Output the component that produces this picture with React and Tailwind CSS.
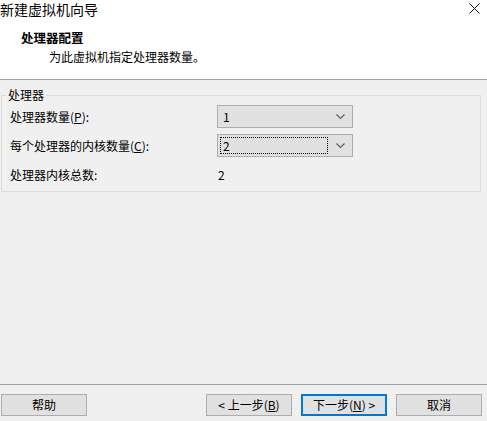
import React from 'react'

const font = { fontFamily: '"Noto Sans CJK SC", "Noto Sans", sans-serif' }

function Chevron() {
  return (
    <svg width="9" height="6" viewBox="0 0 9 6" className="shrink-0">
      <path d="M0.5 0.5 L4.5 4.5 L8.5 0.5" fill="none" stroke="#606060" strokeWidth="1.2" />
    </svg>
  )
}

function Combo({ value, focused }) {
  return (
    <div className="flex h-[23px] w-[136px] items-center border border-[#adadad] bg-[#e1e1e1] pl-[2px] pr-[7px]">
      <div
        className={
          'flex h-[17px] flex-1 items-center pl-[2px] text-[12px] leading-none ' +
          (focused ? 'border border-dotted border-black' : 'border border-transparent')
        }
      >
        {value}
      </div>
      <div className="ml-[8px]"><Chevron /></div>
    </div>
  )
}

function Button({ children, primary }) {
  return (
    <button
      className={
        'flex h-[22px] w-[86px] items-center justify-center bg-[#e1e1e1] text-[12px] leading-none text-black ' +
        (primary ? 'border-2 border-[#0078d7]' : 'border border-[#adadad]')
      }
    >
      {children}
    </button>
  )
}

export default function App() {
  return (
    <div className="flex h-[421px] w-[487px] flex-col bg-[#f0f0f0] text-black" style={font}>
      {/* header */}
      <div className="h-[80px] shrink-0 border-b border-[#a0a0a0] bg-white">
        <div className="flex items-start justify-between">
          <div className="pt-[1px] text-[14px] leading-[16px]">新建虚拟机向导</div>
          <svg width="11" height="11" viewBox="0 0 11 11" className="mr-[7px] mt-[3px]">
            <path d="M0.5 0.5 L10.5 10.5 M10.5 0.5 L0.5 10.5" stroke="#111" strokeWidth="1" />
          </svg>
        </div>
        <div className="ml-[21px] mt-[14px] text-[12.5px] font-bold leading-[14px]">处理器配置</div>
        <div className="ml-[49px] mt-[5px] text-[12px] leading-[14px]">为此虚拟机指定处理器数量。</div>
      </div>

      {/* body */}
      <div className="flex-1">
        <fieldset className="ml-[1px] mt-[8px] h-[104px] w-[480px] border border-[#dcdcdc]">
          <legend className="ml-[4px] px-[2px] text-[12px] leading-[14px]">处理器</legend>
          <div className="grid grid-cols-[207px_136px] gap-y-[6px] pl-[8px] pt-[3px] text-[12px] leading-none">
            <div className="flex items-center">
              处理器数量(<span className="underline">P</span>):
            </div>
            <Combo value="1" />
            <div className="flex items-center">
              每个处理器的内核数量(<span className="underline">C</span>):
            </div>
            <Combo value="2" focused />
            <div className="flex h-[23px] items-center">处理器内核总数:</div>
            <div className="flex h-[23px] items-center pl-[1px]">2</div>
          </div>
        </fieldset>
      </div>

      {/* footer */}
      <div className="flex h-[37px] shrink-0 items-start border-t border-[#a0a0a0] pl-[1px] pt-[9px]">
        <Button>帮助</Button>
        <div className="ml-[119px] flex gap-[9px]">
          <Button>
            &lt; 上一步(<span className="underline">B</span>)
          </Button>
          <Button primary>
            下一步(<span className="underline">N</span>) &gt;
          </Button>
          <Button>取消</Button>
        </div>
      </div>
    </div>
  )
}
